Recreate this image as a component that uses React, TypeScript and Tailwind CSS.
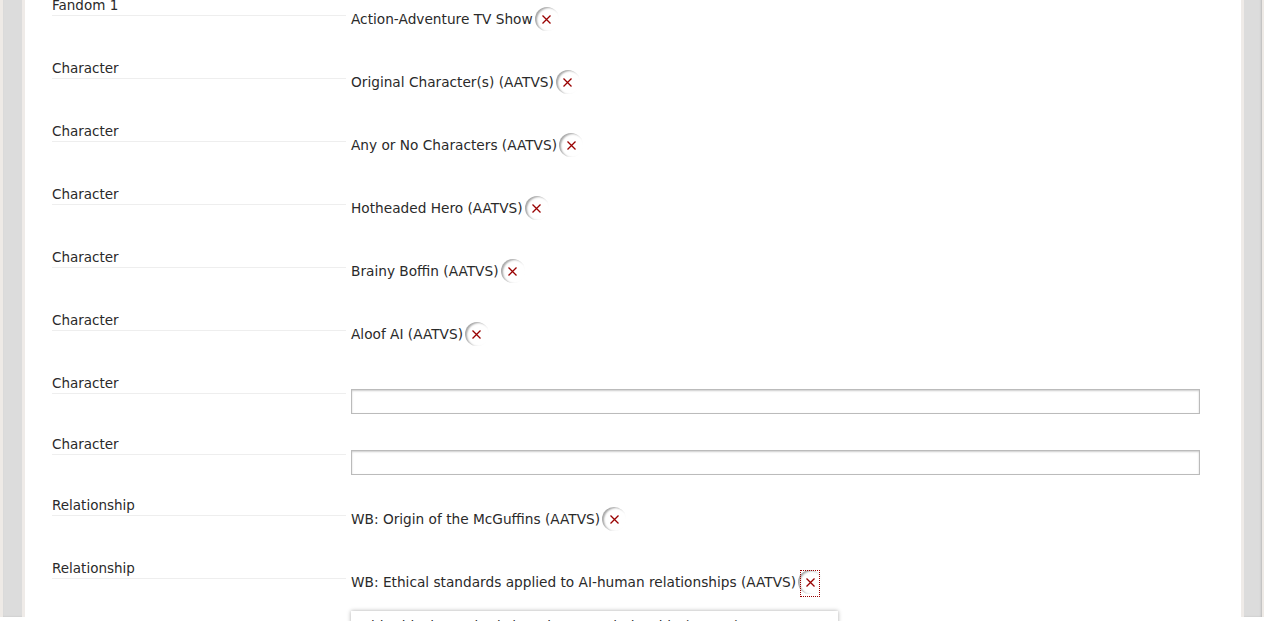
import React from "react";

type Row =
  | { kind: "tag"; label: string; value: string; focused?: boolean }
  | { kind: "input"; label: string };

const rows: Row[] = [
  { kind: "tag", label: "Fandom 1", value: "Action-Adventure TV Show" },
  { kind: "tag", label: "Character", value: "Original Character(s) (AATVS)" },
  { kind: "tag", label: "Character", value: "Any or No Characters (AATVS)" },
  { kind: "tag", label: "Character", value: "Hotheaded Hero (AATVS)" },
  { kind: "tag", label: "Character", value: "Brainy Boffin (AATVS)" },
  { kind: "tag", label: "Character", value: "Aloof AI (AATVS)" },
  { kind: "input", label: "Character" },
  { kind: "input", label: "Character" },
  { kind: "tag", label: "Relationship", value: "WB: Origin of the McGuffins (AATVS)" },
  {
    kind: "tag",
    label: "Relationship",
    value: "WB: Ethical standards applied to AI-human relationships (AATVS)",
    focused: true,
  },
];

function DeleteButton({ focused }: { focused?: boolean }) {
  return (
    <span className="relative ml-[2px] flex h-[24px] w-[24px] shrink-0 items-center justify-center rounded-full bg-white shadow-[inset_2px_1px_2px_#a8a8a8]">
      <svg width="11" height="11" viewBox="0 0 11 11">
        <path d="M1.5 1.5 L9.5 9.5 M9.5 1.5 L1.5 9.5" stroke="#990000" strokeWidth="1.3" />
      </svg>
      {focused ? (
        <span className="absolute left-[2px] top-0 h-[27px] w-[20px] border border-dotted border-[#990000]" />
      ) : null}
    </span>
  );
}

function Label({ text }: { text: string }) {
  return (
    <div className="h-[20px] w-[294px] shrink-0 border-b border-[#eeeeee] text-[13.5px] leading-[18px]">
      {text}
    </div>
  );
}

export default function App() {
  return (
    <div
      className="h-screen overflow-hidden bg-white pr-[15px] text-[13.7px] text-[#2a2a2a]"
      style={{ fontFamily: '"DejaVu Sans", Verdana, sans-serif' }}
    >
      <div className="h-full border-l-[3px] border-r-[2px] border-[#eeeae6] bg-[#dcdcdc] pl-[19px] pr-[18px] shadow-[inset_-1px_0_2px_#bbb]">
        <div className="h-full border-x-[3px] border-[#efebe8] bg-white pl-[27px]">
          <div className="-mt-[4px]">
            {rows.map((row, i) =>
              row.kind === "tag" ? (
                <div key={i} className="flex h-[63px] items-start gap-[5px]">
                  <Label text={row.label} />
                  <div className="mt-[11px] flex h-[24px] items-center">
                    <span className="whitespace-nowrap">{row.value}</span>
                    <DeleteButton focused={row.focused} />
                  </div>
                </div>
              ) : (
                <div key={i} className="flex h-[61px] items-start gap-[5px]">
                  <Label text={row.label} />
                  <div className="mt-[15px] h-[25px] w-[849px] border border-[#bbbbbb] shadow-[inset_0_1px_2px_#ccc]" />
                </div>
              )
            )}
            <div className="-mt-[11px] ml-[299px] w-[487px] bg-white pl-[20px] pt-[6px] leading-[18px] text-[#2a2a2a] shadow-[0_0_4px_#aaa]">
              <span className="whitespace-nowrap">
                hi Ethical Standards in AI-human relationship (AATVS)
              </span>
            </div>
          </div>
        </div>
      </div>
    </div>
  );
}
